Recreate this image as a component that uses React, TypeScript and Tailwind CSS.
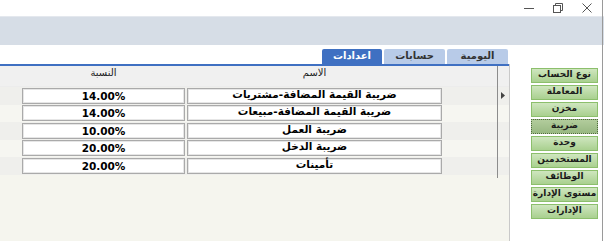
import React from "react";

const rows = [
  { name: "ضريبة القيمة المضافة-مشتريات", pct: "14.00%" },
  { name: "ضريبة القيمة المضافة-مبيعات", pct: "14.00%" },
  { name: "ضريبة العمل", pct: "10.00%" },
  { name: "ضريبة الدخل", pct: "20.00%" },
  { name: "تأمينات", pct: "20.00%" },
];

const buttons = [
  "نوع الحساب",
  "المعاملة",
  "مخزن",
  "ضريبة",
  "وحدة",
  "المستخدمين",
  "الوظائف",
  "مستوى الإدارة",
  "الإدارات",
];

const font = { fontFamily: '"DejaVu Sans", "Noto Sans", sans-serif' };

export default function App() {
  return (
    <div
      className="relative w-[604px] h-[241px] bg-white overflow-hidden flex flex-col"
      style={font}
    >
      {/* window border right */}
      <div className="absolute right-[1px] top-0 bottom-0 w-px bg-[#9a9a9a]" />
      {/* title bar */}
      <div className="h-[16px] flex justify-end items-center pr-[3px] text-[#555]">
        <div className="w-[29px] h-[16px] flex items-center justify-center">
          <svg width="10" height="10" viewBox="0 0 10 10">
            <path d="M0 5.5 H10" stroke="#555" strokeWidth="1" />
          </svg>
        </div>
        <div className="w-[29px] h-[16px] flex items-center justify-center">
          <svg width="10" height="10" viewBox="0 0 10 10">
            <rect x="0.5" y="2.5" width="7" height="7" fill="none" stroke="#555" />
            <path d="M2.5 2.5 V0.5 H9.5 V7.5 H7.5" fill="none" stroke="#555" />
          </svg>
        </div>
        <div className="w-[29px] h-[16px] flex items-center justify-center">
          <svg width="10" height="10" viewBox="0 0 10 10">
            <path d="M0.5 0.5 L9.5 9.5 M9.5 0.5 L0.5 9.5" stroke="#555" strokeWidth="1" />
          </svg>
        </div>
      </div>
      {/* band */}
      <div className="h-[29px] bg-[#d6dde6] border-t border-[#e4e8ee]" />
      {/* tabs */}
      <div className="h-[19px] flex justify-end items-end pr-[96px]">
        <div dir="rtl" className="flex h-[15px] gap-[2px] text-[10px] font-bold leading-none">
          <div className="w-[61px] h-full bg-[#b8cbe8] text-[#333] flex items-center justify-center rounded-t-[2px]">
            <span className="relative -top-[1px]">اليومية</span>
          </div>
          <div className="w-[61px] h-full bg-[#b8cbe8] text-[#333] flex items-center justify-center rounded-t-[2px]">
            <span className="relative -top-[1px]">حسابات</span>
          </div>
          <div className="w-[60px] h-full bg-[#3f70c2] text-white flex items-center justify-center rounded-t-[2px]">
            <span className="relative -top-[1px]">اعدادات</span>
          </div>
        </div>
      </div>
      {/* main */}
      <div className="flex-1 flex">
        {/* grid */}
        <div className="w-[510px] flex flex-col border-r border-[#c9c9c9] bg-[#f5f5ee]">
          <div className="h-[2px] bg-[#3f70c2]" />
          <div className="relative flex flex-col">
            {/* header */}
            <div className="h-[20px] bg-[#f0f0f0] flex text-[10px] text-[#222] leading-none">
              <div className="w-[22px]" />
              <div className="w-[163px] flex items-center justify-center pb-[6px]">النسبة</div>
              <div className="w-[2px]" />
              <div className="w-[255px] flex items-center justify-center pb-[6px]">الاسم</div>
              <div className="flex-1" />
            </div>
            <div className="h-[1px] bg-[#ececec]" />
            {rows.map((r, i) => (
              <div
                key={i}
                className={`h-[17.5px] flex items-center text-[10.5px] font-bold text-black leading-none ${
                  i % 2 === 0 ? "bg-[#efefec]" : "bg-[#f6f6f1]"
                }`}
              >
                <div className="w-[22px]" />
                <div className="w-[163px] h-[16px] bg-white border border-[#aaaaaa] shadow-[inset_0_0_0_1px_#e6e6e6] flex items-center justify-center">
                  {r.pct}
                </div>
                <div className="w-[2px]" />
                <div
                  dir="rtl"
                  className="w-[255px] h-[16px] bg-white border border-[#aaaaaa] shadow-[inset_0_0_0_1px_#e6e6e6] flex items-center justify-center whitespace-nowrap"
                >
                  <span className="relative -top-[2px]">{r.name}</span>
                </div>
                <div className="w-[55px]" />
                <div className="w-[12px] h-full flex items-center justify-center">
                  {i === 0 && (
                    <svg width="5" height="7" viewBox="0 0 5 7">
                      <path d="M0 0 L4 3.5 L0 7 Z" fill="#444" />
                    </svg>
                  )}
                </div>
              </div>
            ))}
            <div className="h-[3px]" />
            <div className="absolute left-[497px] top-0 bottom-0 w-px bg-[#8c8c8c]" />
          </div>
        </div>
        {/* right panel */}
        <div className="flex-1 flex flex-col items-start pl-[21px] pt-[4px] gap-[2px]">
          {buttons.map((b) => {
            const sel = b === "ضريبة";
            return (
              <div
                key={b}
                dir="rtl"
                className={`w-[67px] h-[15px] flex items-center justify-center text-[9px] font-bold text-[#1b1b1b] leading-none whitespace-nowrap overflow-hidden ${
                  sel
                    ? "bg-gradient-to-b from-[#b2cc9c] to-[#98b882] border border-dotted border-[#4f6b3c]"
                    : "bg-gradient-to-b from-[#cfe6bf] to-[#a9d08f] border border-[#8cbf6c]"
                }`}
              >
                <span className="relative -top-[1.5px]">{b}</span>
              </div>
            );
          })}
        </div>
      </div>
    </div>
  );
}
